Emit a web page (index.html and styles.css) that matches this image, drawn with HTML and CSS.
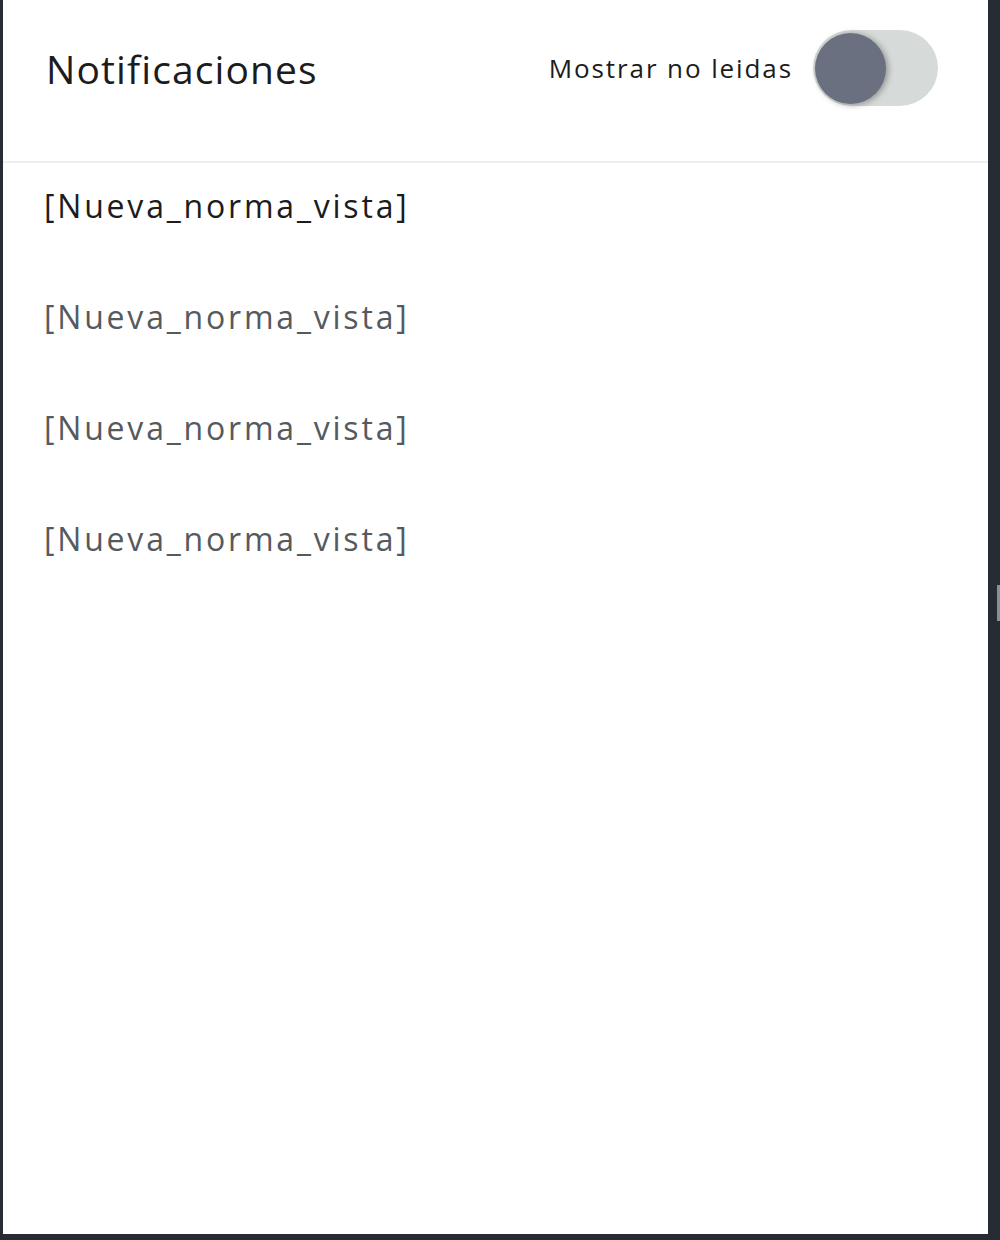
FILE: index.html
```html
<!DOCTYPE html>
<html lang="es">
<head>
    <meta charset="UTF-8">
    <title>Notificaciones</title>
    <link rel="stylesheet" href="styles.css">
</head>
<body>
    <div class="panel">
        <div class="header">
            <h1>Notificaciones</h1>
            <label class="filter">
                <span>Mostrar no leidas</span>
                <span class="switch"><span class="knob"></span></span>
            </label>
        </div>

        <!-- lista de notificaciones -->
        <ul class="notif-list">
            <li class="notif unread">[Nueva_norma_vista]</li>
            <li class="notif">[Nueva_norma_vista]</li>
            <li class="notif">[Nueva_norma_vista]</li>
            <li class="notif">[Nueva_norma_vista]</li>
        </ul>
    </div>
    <div class="scroll-hint"></div>
</body>
</html>
```

FILE: styles.css
```css
:root {
    --dark: #272c32;
    --text: #1c1c1c;
    --muted: #555a5e;
}

html, body {
    margin: 0;
    height: 100%;
}

body {
    font-family: 'Open Sans', 'Liberation Sans', sans-serif;
    font-variant-ligatures: none;
    background: var(--dark);
    padding: 0 12px 6px 3px;
    box-sizing: border-box;
    position: relative;
}

.panel {
    background: #fff;
    height: 100%;
}

.header {
    display: flex;
    align-items: center;
    justify-content: space-between;
    height: 163px;
    padding: 0 50px 25px 43px;
    box-sizing: border-box;
    border-bottom: 2px solid #eeeeee;
}

.header h1 {
    margin: 0;
    font-size: 39px;
    font-weight: 400;
    letter-spacing: 1.1px;
    color: var(--text);
}

.filter {
    display: flex;
    align-items: center;
    gap: 20px;
    font-size: 26px;
    letter-spacing: 1.9px;
    color: var(--text);
}

.switch {
    position: relative;
    width: 125px;
    height: 76px;
    border-radius: 38px;
    background: #d6dbda;
}

.knob {
    position: absolute;
    top: 3px;
    left: 2px;
    width: 71px;
    height: 71px;
    border-radius: 50%;
    background: #6b7080;
    box-shadow: 2px 1px 6px rgba(0,0,0,0.35);
}

.notif-list {
    list-style: none;
    margin: 0;
    padding: 18px 0 0 41px;
    display: flex;
    flex-direction: column;
    gap: 61px;
}

.notif {
    font-size: 32px;
    line-height: 50px;
    letter-spacing: 2.8px;
    color: var(--muted);
}

.notif.unread {
    color: var(--text);
}

.scroll-hint {
    position: absolute;
    right: 0;
    top: 585px;
    width: 3px;
    height: 36px;
    background: #8b9096;
}
```
